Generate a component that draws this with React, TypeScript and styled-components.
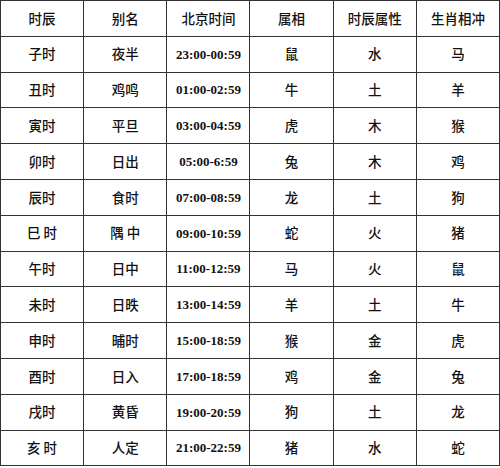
import styled, { createGlobalStyle } from 'styled-components';

const GlobalStyle = createGlobalStyle`
  html, body {
    margin: 0;
    padding: 0;
    background: #ffffff;
  }
  body {
    font-family: "Noto Sans CJK SC", "Noto Sans", sans-serif;
  }
`

const Table = styled.table`
  width: 500px;
  border-collapse: collapse;
  table-layout: fixed;
  border: 1px solid #555;
  color: #111;
`

const Row = styled.tr`
  height: 35.8px;
`

const Cell = styled.td<{ $time?: boolean }>`
  border: 1px solid #333;
  padding: 0;
  text-align: center;
  vertical-align: middle;
  font-family: ${p => p.$time
    ? '"Liberation Serif", "Times New Roman", serif'
    : '"Noto Sans CJK SC", "Noto Sans", sans-serif'};
  font-size: ${p => p.$time ? '13px' : '13.5px'};
  font-weight: ${p => p.$time ? 700 : 500};
  line-height: 1;
  white-space: pre;
`

const header = ['时辰', '别名', '北京时间', '属相', '时辰属性', '生肖相冲']

const rows = [
  ['子时', '夜半', '23:00-00:59', '鼠', '水', '马'],
  ['丑时', '鸡鸣', '01:00-02:59', '牛', '土', '羊'],
  ['寅时', '平旦', '03:00-04:59', '虎', '木', '猴'],
  ['卯时', '日出', '05:00-6:59', '兔', '木', '鸡'],
  ['辰时', '食时', '07:00-08:59', '龙', '土', '狗'],
  ['巳 时', '隅 中', '09:00-10:59', '蛇', '火', '猪'],
  ['午时', '日中', '11:00-12:59', '马', '火', '鼠'],
  ['未时', '日昳', '13:00-14:59', '羊', '土', '牛'],
  ['申时', '晡时', '15:00-18:59', '猴', '金', '虎'],
  ['酉时', '日入', '17:00-18:59', '鸡', '金', '兔'],
  ['戌时', '黄昏', '19:00-20:59', '狗', '土', '龙'],
  ['亥 时', '人定', '21:00-22:59', '猪', '水', '蛇'],
]

const App = () => {
  return (
    <>
      <GlobalStyle />
      <Table>
        <tbody>
          <Row>
            {header.map(h => <Cell key={h}>{h}</Cell>)}
          </Row>
          {rows.map(r => (
            <Row key={r[0]}>
              {r.map((c, i) => (
                <Cell key={i} $time={i === 2}>{c}</Cell>
              ))}
            </Row>
          ))}
        </tbody>
      </Table>
    </>
  )
}

export default App
